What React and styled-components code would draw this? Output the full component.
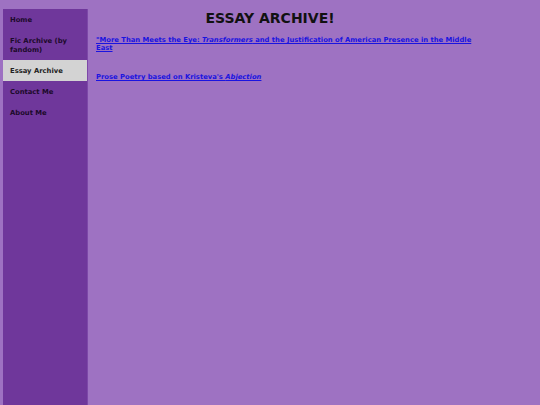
import React from 'react';
import styled, { createGlobalStyle } from 'styled-components';

const GlobalStyle = createGlobalStyle`
  html, body {
    margin: 0;
    padding: 0;
    background: #9e72c2;
    font-family: "DejaVu Sans", Verdana, sans-serif;
  }
`;

const Page = styled.div`
  display: flex;
  align-items: stretch;
  min-height: 405px;
  padding: 9px 0 0 3px;
  box-sizing: border-box;
`;

const Sidebar = styled.nav`
  width: 84px;
  flex: none;
  background: #6f379b;
  border-right: 1px solid #7d48a8;
  display: flex;
  flex-direction: column;
`;

const NavItem = styled.a`
  display: block;
  padding: 7px 7px 5px;
  font-size: 6.8px;
  font-weight: bold;
  line-height: 9px;
  color: ${p => (p.active ? '#222' : '#1c0a2a')};
  background: ${p => (p.active ? '#d3d3d3' : 'transparent')};
  text-decoration: none;
`;

const Main = styled.main`
  flex: 1;
  padding: 0 60px 0 8px;
`;

const Title = styled.h1`
  margin: 0 0 10px;
  padding: 1px 36px 0 0;
  text-align: center;
  font-size: 14px;
  line-height: 16px;
  color: #111;
`;

const EssayList = styled.div`
  display: flex;
  flex-direction: column;
  gap: 21px;
`;

const Essay = styled.a`
  display: block;
  font-size: 6.8px;
  line-height: 8px;
  font-weight: bold;
  color: #1a14e0;
  text-decoration: underline;
`;

const navLinks = ['Home', 'Fic Archive (by fandom)', 'Essay Archive', 'Contact Me', 'About Me'];

export default function App() {
  return (
    <>
      <GlobalStyle />
      <Page>
        <Sidebar>
          {navLinks.map(label => (
            <NavItem key={label} href="#" active={label === 'Essay Archive'}>
              {label}
            </NavItem>
          ))}
        </Sidebar>
        <Main>
          <Title>ESSAY ARCHIVE!</Title>
          <EssayList>
            <Essay href="#">
              "More Than Meets the Eye: <i>Transformers</i> and the Justification of American Presence in the Middle East
            </Essay>
            <Essay href="#">
              Prose Poetry based on Kristeva's <i>Abjection</i>
            </Essay>
          </EssayList>
        </Main>
      </Page>
    </>
  );
}
